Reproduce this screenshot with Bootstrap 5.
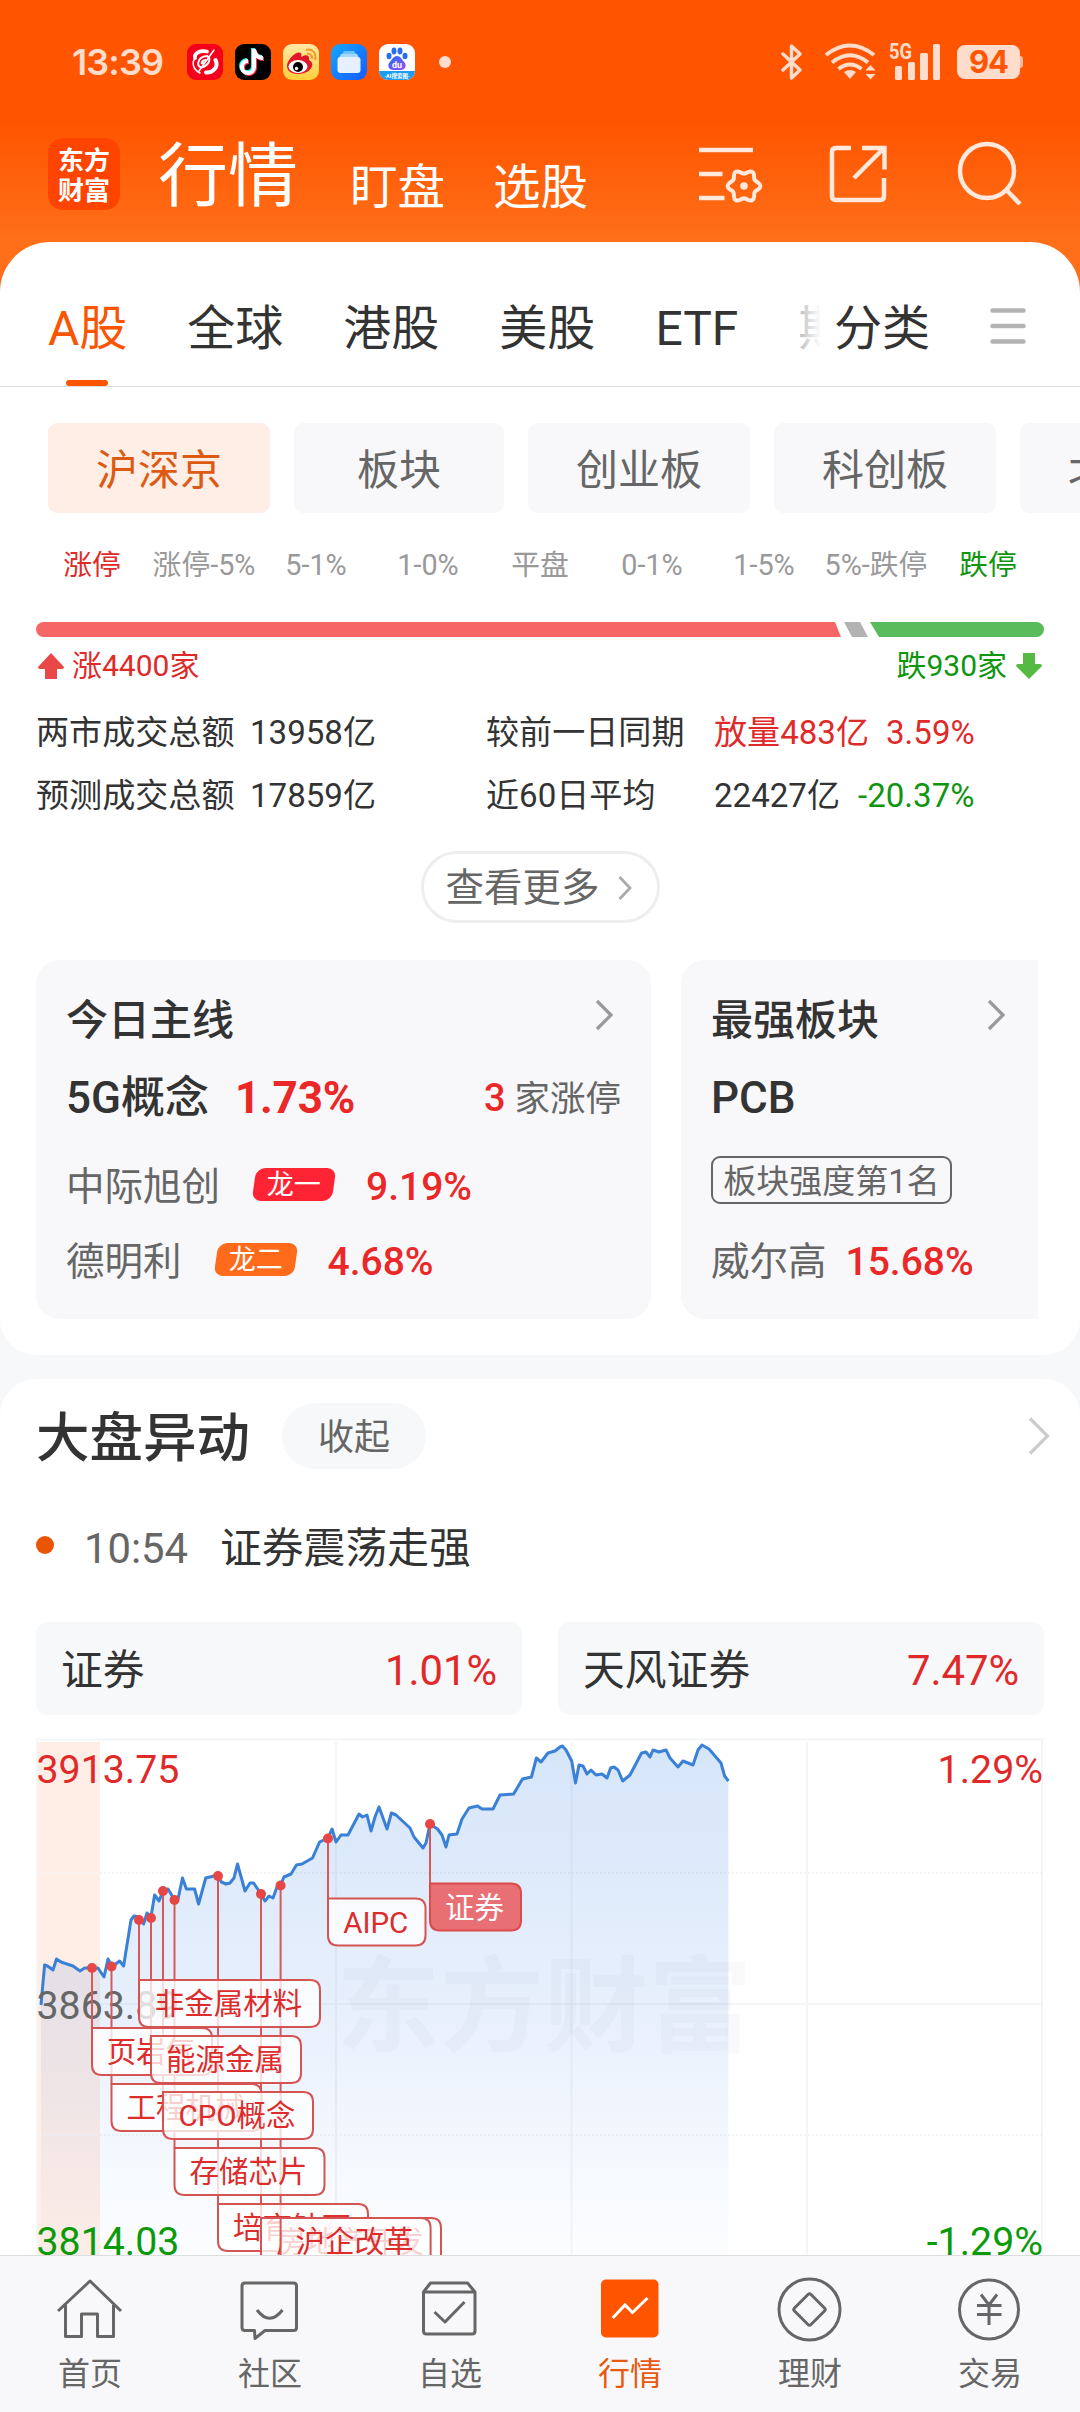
<!DOCTYPE html>
<html lang="zh-CN">
<head>
<meta charset="utf-8">
<meta name="viewport" content="width=device-width, initial-scale=1">
<title>行情</title>
<link href="https://cdn.jsdelivr.net/npm/bootstrap@5.3.0/dist/css/bootstrap.min.css" rel="stylesheet">
<style>
html,body{height:2412px;overflow:hidden}
body{font-family:Roboto,"Noto Sans CJK SC",sans-serif;background:#f7f8fa;color:#333;line-height:1;white-space:nowrap}
svg{display:block;flex:none}
.top-area{height:300px;background:linear-gradient(#ff5500 0,#ff5500 122px,#ff6f19 242px)}
.status{height:124px;padding:0 57px 0 72px;color:#ffdccc}
.clock{font:600 36px/1 Inter,sans-serif;width:115px;letter-spacing:-.9px}
.batt{width:63px;height:34px;border-radius:8px;background:#ffdccc;color:#ff5500;font:700 31px/34px Inter,sans-serif;text-align:center;letter-spacing:-1px}
.batt-cap{width:3px;height:12px;background:#ffb899;border-radius:0 3px 3px 0}
.titles{height:118px;padding:0 48px;color:#fff}
.brand{width:72px;height:72px;border-radius:15px;background:#ff4400;font:700 26px/30px "Noto Sans CJK SC",sans-serif;margin-bottom:32px}
.t-main{font-size:70px;line-height:70px;margin:0 0 30px 38px}
.t-sub{font-size:47.5px;line-height:48px;margin-bottom:30px}
.panel{background:#fff}
.p-one{margin-top:-58px;border-radius:50px 50px 36px 36px;height:1113px}
.p-two{margin-top:24px;border-radius:36px 36px 0 0}
.tabs{height:145px;border-bottom:1px solid #ddd;font-size:48px;padding-left:48px}
.tabs-scroll{width:773px;gap:60px;overflow:hidden;position:relative;line-height:60px;height:144px;padding-top:57px}
.tabs-scroll::after{content:"";position:absolute;right:0;top:0;width:48px;height:100%;background:linear-gradient(90deg,rgba(255,255,255,.3),#fff)}
.on{color:#f95502;position:relative}
.on::after{content:"";position:absolute;left:18px;top:81px;width:42px;height:6px;border-radius:3px;background:#ff5500}
.chips{gap:24px;padding:36px 0 0 48px;overflow:hidden}
.chip{height:90px;min-width:210px;padding:0 48px;border-radius:9px;background:#f8f8fb;color:#666;font-size:42px;line-height:95px;text-align:center;flex:none}
.chip.act{background:#ffeee6;color:#dd5a12}
.dist{margin:32px 36px 0;font-size:28.8px;line-height:40px;color:#999}
.dist span{width:112px;text-align:center;flex:none}
.up{color:#e02a2a}.dn{color:#109510}
.breadth{margin:37px 36px 0}
.ud{margin:8px 36px 0;height:41px;font-size:30px}
.stats{margin:15px 36px 0;font-size:33.100px;line-height:63px}
.stats .c1{width:214px}.stats .c2{width:236px}.stats .c3{width:228px}
.more{width:239px;height:72px;margin:24px auto 0;border:3px solid #eee;border-radius:36px;font-size:38.500px;color:#666;gap:18px;padding:2px 3px 0 0;line-height:64px}
.cards{margin:37px 42px 0 36px;gap:30px}
.tile{background:#f8f8fb;border-radius:24px;height:359px;padding:31px 30px 0}
.tile-a{width:615px}.tile-b{width:357px;border-radius:24px 0 0 24px}
.tile .ln{height:60px}
.h1x{font-size:42px;font-weight:500}
.h1x svg{margin-top:-12px}
.lead-row{font-size:44px}
.nm{font-size:38.500px;color:#666;line-height:60px}
.pc{font-size:39px;font-weight:500;color:#ea2828}
.dragon{width:80px;height:33px;border-radius:9px;transform:skewX(-8deg);margin-top:-6px}
.dragon span{display:block;transform:skewX(8deg);color:#fff;font-size:27px;line-height:35px;text-align:center}
.rank{width:241px;height:48px;border:2px solid #666;border-radius:9px;color:#666;font-size:33px;line-height:48px;text-align:center}
.heading{padding:24px 30px 0 36px;height:90px}
.fold{width:144px;height:66px;border-radius:33px;background:#f7f8fa;color:#666;font-size:36px;line-height:70px;text-align:center;margin-left:32px}
.event{margin:50px 36px 0;height:60px;font-size:41.800px}
.dot{width:18px;height:18px;border-radius:50%;background:#ea5504;margin-top:-8px}
.pair{margin:43px 36px 21px;gap:36px;font-size:41.800px}
.pair>div{height:93px;background:#f7f8fa;border-radius:12px;padding:4px 25px 0}
.navbar-b{height:157px;background:#f8f8fa;border-top:1px solid #ddd;color:#666;font-size:32px}
.navbar-b .it{width:180px;padding-top:18px}
.navbar-b span{margin-top:12px}
.ico{fill:none;stroke:#666;stroke-width:3;stroke-linejoin:round}
</style>
<script src="https://cdn.jsdelivr.net/npm/bootstrap@5.3.0/dist/js/bootstrap.bundle.min.js"></script>
</head>
<body>
<header class="top-area">
  <div class="status d-flex align-items-center">
    <div class="clock">13:39</div>
    <div class="d-flex" style="gap:12px">
      <svg width="36" height="36" viewBox="0 0 36 36"><rect width="36" height="36" rx="9" fill="#f4001c"/><g fill="none" stroke="#fff" stroke-linecap="round"><path d="M20 7.500C13 6 7 9 8 14" stroke-width="3.800"/><path d="M8 14C4 20 7 26 13 29" stroke-width="1.500"/><path d="M28.500 16C32 23 26 29 19 28.500" stroke-width="4"/><path d="M27 6 12 27" stroke-width="1.500"/><path d="M20 12C9 13 9 25 16 23 23 20 24 14 20 12M19 16C13 17 14 21 17 19" stroke-width="2"/></g></svg>
      <svg width="36" height="36" viewBox="0 0 36 36"><rect width="36" height="36" rx="9"/><g fill="none" stroke-width="4"><path d="M19 5v18a6 6 0 1 1-6-6M19 6c1 5 4 8 9 8" stroke="#25f4ee" transform="translate(-1 -1)"/><path d="M19 5v18a6 6 0 1 1-6-6M19 6c1 5 4 8 9 8" stroke="#fe2c55" transform="translate(1 1)"/><path d="M19 5v18a6 6 0 1 1-6-6M19 6c1 5 4 8 9 8" stroke="#fff"/></g></svg>
      <svg width="36" height="36" viewBox="0 0 36 36"><defs><linearGradient id="wb" x2="0" y2="1"><stop stop-color="#ffe9a6"/><stop offset="1" stop-color="#ffcf3a"/></linearGradient></defs><rect width="36" height="36" rx="9" fill="url(#wb)"/><path d="M4 22C4 15 14 6 18 9q1 2 0 4c5-3 9-2 8 3 6 3 3 9-2 12C15 32 4 30 4 22Z" fill="#e0162b"/><ellipse cx="15" cy="22.500" rx="9.500" ry="6.500" fill="#fff"/><circle cx="15" cy="23" r="5"/><circle cx="13.500" cy="24.500" r="1.700" fill="#fff"/><path d="M24 10c3-1 6 2 5 5M23 6c6-2 11 3 9 10" fill="none" stroke="#f59a23" stroke-width="2"/></svg>
      <svg width="36" height="36" viewBox="0 0 36 36"><defs><linearGradient id="fb" x2="1" y2="1"><stop stop-color="#13a8ff"/><stop offset="1" stop-color="#1559ff"/></linearGradient></defs><rect width="36" height="36" rx="9" fill="url(#fb)"/><path d="M13 7h10l2 3H11z" fill="#6cc4ff"/><path d="M10 10h16l2 4H8z" fill="#a5d8ff"/><rect x="6.500" y="13" width="23" height="16" rx="3" fill="#e6f0ff"/></svg>
      <svg width="36" height="36" viewBox="0 0 36 36"><defs><clipPath id="bc"><rect width="36" height="36" rx="9"/></clipPath><linearGradient id="bp" x2="1" y2="1"><stop stop-color="#1f6bff"/><stop offset="1" stop-color="#a04cf0"/></linearGradient></defs><g clip-path="url(#bc)"><rect width="36" height="36" fill="#fff"/><g fill="#2a6cf0"><ellipse cx="10" cy="12" rx="2.500" ry="3.200"/><ellipse cx="15" cy="7" rx="2.500" ry="3.400"/><ellipse cx="21" cy="7" rx="2.500" ry="3.400"/><ellipse cx="26" cy="12" rx="2.500" ry="3.200"/></g><path d="M18 12c4 0 5 4 8 7 2 4-1 7-4 7h-8c-3 0-6-3-4-7 3-3 4-7 8-7Z" fill="url(#bp)"/><text x="18" y="24" font-size="9" fill="#fff" text-anchor="middle" font-weight="700">du</text><rect y="27" width="36" height="9" fill="#1b9df5"/><text x="18" y="34" font-size="5.500" fill="#fff" text-anchor="middle" font-weight="700">·AI搜索图·</text></g></svg>
    </div>
    <svg width="12" height="12" class="ms-4"><circle cx="6" cy="6" r="6" fill="#ffdccc"/></svg>
    <div class="ms-auto d-flex align-items-center">
      <svg width="22" height="38" viewBox="0 0 22 38" style="margin-right:21px" fill="none" stroke="#ffdccc" stroke-width="3.400" stroke-linejoin="round" stroke-linecap="round"><path d="M2 11 19 27l-8.500 8V3L19 11 2 27"/></svg>
      <svg width="54" height="38" viewBox="0 0 54 38" style="margin-right:11px" fill="none" stroke="#ffdccc" stroke-width="4"><path d="M2 12Q26-7 50 12M8 19.500Q26 5 44 19.500M14.500 26Q26 17 37.500 26"/><path d="M20 29q6-4 12 0l-6 7z" fill="#ffdccc" stroke="none"/><path d="M41.500 27.500 46.500 22l5 5.500zM41.500 31l5 5.500 5-5.500z" fill="#ffdccc" stroke="none"/></svg>
      <svg width="54" height="40" viewBox="0 0 54 40" style="margin-right:14px" fill="#ffdccc"><text x="0" y="17" font-size="22" font-weight="700" font-family="Roboto" textLength="23" lengthAdjust="spacingAndGlyphs">5G</text><rect x="6" y="24" width="7" height="14" rx="1.500"/><rect x="19" y="20" width="7" height="18" rx="1.500"/><rect x="31" y="11" width="8" height="27" rx="1.500"/><rect x="44" y="2" width="7" height="36" rx="1.500"/></svg>
      <div class="batt">94</div><div class="batt-cap"></div>
    </div>
  </div>
  <div class="titles d-flex align-items-end">
    <div class="brand d-flex flex-column justify-content-center align-items-center"><div>东方</div><div>财富</div></div>
    <div class="t-main">行情</div><div class="t-sub" style="margin-left:52px">盯盘</div><div class="t-sub" style="margin-left:48px">选股</div>
    <div class="ms-auto d-flex" style="gap:57px;margin-bottom:32px;margin-right:7px">
      <svg width="72" height="72" viewBox="695 138 72 72" fill="none" stroke="#ffe8dc" stroke-width="4.500"><path d="M699 150h54M699 174h23.500M699 198h25.500"/><g transform="translate(744 186)" stroke-width="4"><path d="M13.800-3.700Q19 0 13.800 3.700 9.500 5.500 10.100 10.100 9.500 16.500 3.700 13.800 0 11-3.700 13.800-9.500 16.500-10.100 10.100-9.500 5.500-13.800 3.700-19 0-13.800-3.700-9.500-5.500-10.100-10.100-9.500-16.500-3.700-13.800 0-11 3.700-13.800 9.500-16.500 10.100-10.100 9.500-5.500 13.800-3.700Z"/><circle r="3.800" fill="#ffe8dc" stroke="none"/></g></svg>
      <svg width="72" height="72" viewBox="824 138 72 72" fill="none" stroke="#ffe8dc" stroke-width="4.500"><path d="M851 148h-15q-4 0-4 4v44q0 4 4 4h44q4 0 4-4v-18M862 148h22.500v21.500M884 148 854 178"/></svg>
      <svg width="72" height="72" viewBox="953 138 72 72" fill="none" stroke="#ffe8dc" stroke-width="4.500"><circle cx="987" cy="171" r="27"/><path d="M1005.500 189 1020 204"/></svg>
    </div>
  </div>
</header>
<main>
<section class="panel p-one">
  <nav class="tabs d-flex">
    <div class="tabs-scroll d-flex"><span class="on">A股</span><span>全球</span><span>港股</span><span>美股</span><span>ETF</span><span>期货</span></div>
    <div style="line-height:60px;padding:57px 0 0 13px">分类</div>
    <svg width="36" height="36" viewBox="0 0 36 36" style="margin:66px 0 0 60px" stroke="#b3b3b3" stroke-width="4.500" stroke-linecap="round"><path d="M2.500 2.500h31M2.500 18h31M2.500 33.500h31"/></svg>
  </nav>
  <div class="chips d-flex"><div class="chip act">沪深京</div><div class="chip">板块</div><div class="chip">创业板</div><div class="chip">科创板</div><div class="chip">北交所</div></div>
  <div class="dist d-flex"><span class="up">涨停</span><span>涨停-5%</span><span>5-1%</span><span>1-0%</span><span>平盘</span><span>0-1%</span><span>1-5%</span><span>5%-跌停</span><span class="dn">跌停</span></div>
  <svg class="breadth" width="1008" height="15" viewBox="0 0 1008 15"><path d="M7.500 0H799l6 15H7.500a7.500 7.500 0 0 1 0-15Z" fill="#f76666"/><path d="M808 0h16l8 15h-16z" fill="#b3b3b3"/><path d="M834 0h166.500a7.500 7.500 0 0 1 0 15H843Z" fill="#5abb5c"/></svg>
  <div class="ud d-flex align-items-center">
    <svg width="28" height="28" viewBox="0 0 28 28"><path d="M15 1 28 15q0 2-2 2h-5v10H9V17H4q-2 0-2-2Z" fill="#ea4848"/></svg><span class="up" style="margin-left:8px">涨4400家</span>
    <span class="dn ms-auto" style="margin-right:9px">跌930家</span><svg width="28" height="28" viewBox="0 0 28 28"><path d="M13 27 0 14q0-2 2-2h5V1h12v11h5q2 0 2 2Z" fill="#56b943"/></svg>
  </div>
  <div class="stats">
    <div class="d-flex"><span class="c1">两市成交总额</span><span class="c2">13958亿</span><span class="c3">较前一日同期</span><span class="up">放量483亿<span style="margin-left:17px">3.59%</span></span></div>
    <div class="d-flex"><span class="c1">预测成交总额</span><span class="c2">17859亿</span><span class="c3">近60日平均</span><span>22427亿<span class="dn" style="margin-left:18px">-20.37%</span></span></div>
  </div>
  <div class="more d-flex align-items-center justify-content-center">查看更多<svg width="14" height="24" viewBox="0 0 14 24" fill="none" stroke="#aaa" stroke-width="2.800"><path d="M1.500 1 12 12 1.500 23"/></svg></div>
  <div class="cards d-flex">
    <div class="tile tile-a">
      <div class="ln d-flex align-items-center h1x">今日主线<svg class="ms-auto" width="20" height="34" viewBox="0 0 20 34" style="margin-right:7px" fill="none" stroke="#999" stroke-width="3.200"><path d="M3 3 17 17 3 31"/></svg></div>
      <div class="ln d-flex align-items-center h1x lead-row" style="margin-top:17px">5G概念<span class="pc fw-bold" style="font-size:44px;margin-left:26px;letter-spacing:-.2px">1.73%</span><span class="ms-auto fw-normal" style="font-size:35.500px;color:#666"><b class="pc" style="font-size:38px">3</b> 家涨停</span></div>
      <div class="ln d-flex align-items-center" style="margin-top:29px"><span class="nm">中际旭创</span><span class="dragon" style="background:#ff2433;margin-left:34px"><span>龙一</span></span><span class="pc" style="margin-left:32px">9.19%</span></div>
      <div class="ln d-flex align-items-center" style="margin-top:15px"><span class="nm">德明利</span><span class="dragon" style="background:#ff6b1a;margin-left:34px"><span>龙二</span></span><span class="pc" style="margin-left:32px">4.68%</span></div>
    </div>
    <div class="tile tile-b">
      <div class="ln d-flex align-items-center h1x">最强板块<svg class="ms-auto" width="20" height="34" viewBox="0 0 20 34" style="margin-right:2px" fill="none" stroke="#999" stroke-width="3.200"><path d="M3 3 17 17 3 31"/></svg></div>
      <div class="ln d-flex align-items-center h1x lead-row" style="margin-top:17px">PCB</div>
      <div class="rank" style="margin-top:28px">板块强度第1名</div>
      <div class="ln d-flex align-items-center" style="margin-top:28px"><span class="nm">威尔高</span><span class="pc" style="margin-left:19px">15.68%</span></div>
    </div>
  </div>
</section>
<section class="panel p-two">
  <div class="heading d-flex align-items-center"><span style="font-size:53.500px;font-weight:500;padding-top:6px">大盘异动</span><span class="fold">收起</span><svg class="ms-auto" width="22" height="38" viewBox="0 0 22 38" fill="none" stroke="#ccc" stroke-width="3.200"><path d="M2 1.500 19.500 19 2 36.500"/></svg></div>
  <div class="event d-flex align-items-center"><div class="dot"></div><span style="color:#666;margin-left:30px;width:136px">10:54</span><span>证券震荡走强</span></div>
  <div class="pair d-flex"><div class="flex-fill d-flex align-items-center justify-content-between">证券<span class="up">1.01%</span></div><div class="d-flex align-items-center justify-content-between" style="width:486px">天风证券<span class="up">7.47%</span></div></div>
  <svg id="chart" width="1080" height="520" viewBox="0 1736 1080 520" font-family="Roboto,'Noto Sans CJK SC',sans-serif">
    <defs><linearGradient id="area" gradientUnits="userSpaceOnUse" x1="0" y1="1745" x2="0" y2="2255"><stop stop-color="#2f80e0" stop-opacity=".2"/><stop offset=".5" stop-color="#3f80e8" stop-opacity=".125"/><stop offset="1" stop-color="#4a86e8" stop-opacity=".015"/></linearGradient></defs>
    <rect x="37" y="1742" width="63" height="514" fill="#ffeee6"/>
    <g fill="none" stroke="#f4f5f7" stroke-width="2"><path d="M36 1739.500H1044M37 1739V2256M336 1742V2256M571.500 1742V2256M807 1742V2256M1042 1739V2256M36 2004H1043"/><path d="M36 1873H1043M36 2135H1043" stroke-dasharray="2 2"/></g>
    <text x="336" y="2044" font-size="104" font-weight="700" fill="#1b2440" fill-opacity=".028" font-family="Noto Sans CJK SC">东方财富</text>
    <path id="fillp" fill="url(#area)"/><path id="linep" fill="none" stroke="#3a80d6" stroke-width="3" stroke-linejoin="round"/>
    <g font-size="39.300"><text x="36.500" y="1783" fill="#e02a2a">3913.75</text><text x="36.500" y="2019" fill="#666">3863.89</text><text x="36.500" y="2255" fill="#0a9a0a">3814.03</text><text x="1043" y="1783" fill="#e02a2a" text-anchor="end">1.29%</text><text x="1043" y="2255" fill="#0a9a0a" text-anchor="end">-1.29%</text></g>
    <g id="pins"></g>
  </svg>
</section>
</main>
<nav class="navbar-b fixed-bottom d-flex">
  <div class="it d-flex flex-column align-items-center"><svg class="ico" width="72" height="72"><path d="M4 37 36 7 67 37M11.500 31V62.500h16V40h16V62.500h16V31"/></svg><span>首页</span></div>
  <div class="it d-flex flex-column align-items-center"><svg class="ico" width="72" height="72"><path d="M11 9h48.500q3 0 3 3v41.500q0 3-3 3H31L21 64.500 20.500 56.500H11q-3 0-3-3V12q0-3 3-3ZM23 36q12.500 16.500 25.500 0"/></svg><span>社区</span></div>
  <div class="it d-flex flex-column align-items-center"><svg class="ico" width="72" height="72"><path d="M9.500 18 16.500 9h37L61 18V57q0 3-3 3H12.500q-3 0-3-3ZM9.500 18H61M20.500 38 31 48 50.500 28"/></svg><span>自选</span></div>
  <div class="it d-flex flex-column align-items-center"><svg width="72" height="72"><rect x="7" y="5.500" width="57.500" height="58" rx="5" fill="#ff5500"/><path d="M18.700 44 31 31l7.500 7.500L53.500 24" fill="none" stroke="#fff" stroke-width="3"/></svg><span style="color:#e85a10">行情</span></div>
  <div class="it d-flex flex-column align-items-center"><svg class="ico" width="72" height="72"><circle cx="35.500" cy="35.500" r="30.500"/><path d="M34 20.500q1.500-1.500 3 0L50.500 34q1.500 1.500 0 3L37 50.500q-1.500 1.500-3 0L20.500 37q-1.500-1.500 0-3Z"/></svg><span>理财</span></div>
  <div class="it d-flex flex-column align-items-center"><svg class="ico" width="72" height="72"><circle cx="35" cy="35.500" r="29.500"/><path d="M27 20.500 35 31l8-10.500M23 31.500h24.500M23 40.500h24.500M35 31V51"/></svg><span>交易</span></div>
</nav>
<script>
// intraday index curve, x and y in chart units
const pts="41,2005 44.6,1965 47.5,1966 53,1970 56.5,1959 61,1962 73,1966 80,1971 84.6,1968 98,1968 104,1977 108,1959 112,1967 119.6,1961 123.6,1966 131,1920 134,1916 139,1917 143.6,1924 147,1913 151,1917 154.6,1895 159,1901 163,1891 168,1889 174,1899 178,1899 182.5,1878 186.4,1889 194.6,1889 198.6,1904 205.7,1878 214,1876 218,1876 221.4,1882 226,1884 230,1883 234,1878 237.5,1864 245,1891 250,1883 253.6,1883 259,1891 265,1901 269,1896 273,1898 277,1887 280,1886 284,1877 291,1874 296.4,1865 302,1864 312.5,1858 319.6,1842 328,1838 332,1829 336,1842 341,1835 348,1835 359,1814 362.5,1817 367,1815 371,1831 375,1817 379,1807 387,1829 391.4,1813 396,1815 410,1828 414,1837 423,1848 426,1843 430,1824 437.5,1829 442,1835 446,1847 449,1835 457,1834 462,1819 469,1808 477.5,1806 482,1809 493,1809 500,1795 513.6,1794 522.5,1779 531.4,1777 536.4,1758 541,1762 548,1753 555,1751 560,1747 562.4,1746 566,1750 571.7,1761 575.5,1783 579,1765 583,1766 587,1774 591,1770 596,1775 602,1774 607,1778 610.6,1768 614,1767 618,1770 622.7,1781 630,1775 641.6,1753 646,1752 650,1757 653,1750 659,1752 666,1750 670,1758 678,1767 683,1761 693,1765 698,1750 702,1745 709,1749 721,1763 724.6,1776 728.4,1781";
linep.setAttribute("d","M"+pts.replace(/ /g,"L"));
fillp.setAttribute("d","M41,2256L"+pts.replace(/ /g,"L")+"V2256Z");
// [pin x, pin y, tag top, tag width, label]
const tags=[[92,1968,2028,120,"页岩气"],[111.500,1966.500,2084,150,"工程机械"],[139,1920,1980,181,"非金属材料"],[151,1918,2036,150,"能源金属"],[163,1891,2092,150,"CPO概念"],[174.500,1900,2148,150,"存储芯片"],[218,1876,2204,150,"培育钻石"],[261,1894,2218,180,"房地产开发"],[280.600,1885.500,2218,150,"沪企改革"],[328,1838.500,1898.500,97.500,"AIPC"],[430,1824,1883.500,91,"证券"]];
let a="",b="",c="";
for(const [x,y,t,w,s] of tags){
  const hot=s==="证券";
  a+=`<path d="M${x} ${y}V${t}" stroke="#d45a5a" stroke-width="2"/>`;
  c+=`<circle cx="${x}" cy="${y}" r="5" fill="#e64646"/>`;
  b+=`<path d="M${x} ${t}h${w-10}q10 0 10 10v27q0 10-10 10h${20-w}q-10 0-10-10z" fill="${hot?"#e87074":"#fff"}" fill-opacity="${hot?1:.78}" stroke="${hot?"#dd4a4a":"#d45454"}" stroke-width="2"/><text x="${x+w/2-1}" y="${t+34}" font-size="29.500" text-anchor="middle" fill="${hot?"#fff":"#dc2c2c"}">${s}</text>`;
}
pins.innerHTML=a+c+b;
</script>
</body>
</html>
